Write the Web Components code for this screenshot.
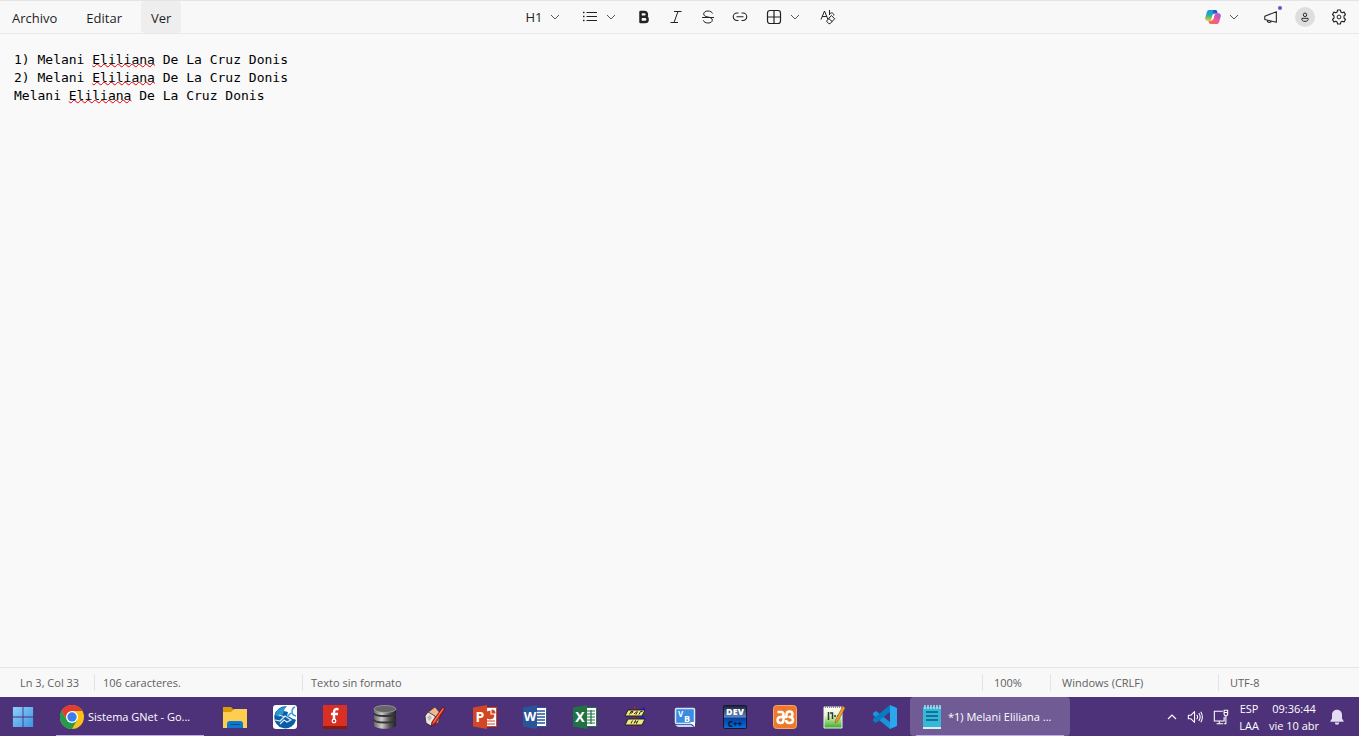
<!DOCTYPE html>
<html lang="es">
<head>
<meta charset="utf-8">
<title>Bloc de notas</title>
<style>
  body {
    margin: 0;
    font-family: "Open Sans", "Noto Sans", sans-serif;
  }
</style>
</head>
<body>
<note-desktop></note-desktop>

<script>
const ICONS = {
  chevron: ['0 0 10 10', '<path d="M1 3l4 4 4-4" fill="none" stroke="currentColor"/>'],
  chevronUp: ['0 0 10 10', '<path d="M1 7l4-4 4 4" fill="none" stroke="currentColor" stroke-width="1.2"/>'],
  list: ['0 0 16 16', '<path d="M4.500 3.500H15M4.500 7.500H15M4.500 11.500H15" stroke="currentColor"/><path d="M1 3.500h1.500M1 7.500h1.500M1 11.500h1.500" stroke="currentColor" stroke-width="1.500"/>'],
  bold: ['0 0 16 16', '<path d="M4.500 3h4a2.300 2.300 0 0 1 0 4.800h-4zM4.500 7.800h4.500a2.600 2.600 0 0 1 0 5.200H4.500z" fill="none" stroke="currentColor" stroke-width="2.500" stroke-linejoin="round"/>'],
  italic: ['0 0 16 16', '<path d="M6 2.500h7.500M2.500 13.500H10M10 2.500l-4 11" fill="none" stroke="currentColor"/>'],
  strike: ['0 0 16 16', '<path d="M12.500 4.500C12 3 10.300 2 8 2 5.500 2 3.700 3.200 3.700 5c0 1.600 1.400 2.500 4.300 3 3 .5 4.300 1.500 4.300 3.100C12.300 12.900 10.500 14 8 14c-2.400 0-4.200-1-4.700-2.700M2 8.500h12" fill="none" stroke="currentColor"/>'],
  link: ['0 0 16 16', '<path d="M6.500 4H5a3.700 3.700 0 0 0 0 7.500h1.500M9.500 4H11a3.700 3.700 0 0 1 0 7.500H9.500M4.500 7.700h7" fill="none" stroke="currentColor" stroke-width="1.100"/>'],
  table: ['0 0 16 16', '<rect x="1.500" y="1.500" width="13" height="13" rx="2.500" fill="none" stroke="currentColor" stroke-width="1.200"/><path d="M8 1.500v13M1.500 8h13" stroke="currentColor" stroke-width="1.200"/>'],
  clear: ['0 0 16 16', '<path d="M1 10.500L4.500 2 8 10.500M2.200 7.500h4.600M9.500 1v5M9.500 5.500c1-2.500 4.500-2 4.300 1" fill="none" stroke="currentColor"/><path d="M11.300 6.500l3.400 3.200-4.600 5H8.800L6.500 12.200zM8.700 9.500l3.500 3" fill="none" stroke="currentColor" stroke-linejoin="round"/>'],
  copilot: ['0 0 16 16', `<defs>
      <linearGradient id="a" x1="0" y1="0" x2="0" y2="1"><stop offset="0" stop-color="#1b8ff0"/><stop offset=".5" stop-color="#25b3a2"/><stop offset="1" stop-color="#f0c71c"/></linearGradient>
      <linearGradient id="b" x1="1" y1="0" x2="0" y2="1"><stop offset="0" stop-color="#a354e8"/><stop offset=".5" stop-color="#ee5b8d"/><stop offset="1" stop-color="#f7733c"/></linearGradient>
    </defs>
    <path d="M4.500 1h5.800c1 0 1.500.6 1.800 1.500l.5 1.700H10c-1 0-1.500.6-1.800 1.500L6.700 10c-.4 1.200-1 1.700-2 1.700H2.500C.5 11.700-.2 10 .4 8l1.500-5C2.400 1.500 3.300 1 4.500 1z" fill="url(#a)"/>
    <path d="M11.500 15H5.700c-1 0-1.500-.6-1.800-1.500l-.5-1.800H6c1 0 1.500-.6 1.800-1.500L9.300 6c.4-1.200 1-1.700 2-1.700h2.200c2 0 2.700 1.700 2.100 3.700l-1.500 5c-.5 1.500-1.400 2-2.600 2z" fill="url(#b)"/>
    <path d="M8 1h2.300c1 0 1.500.6 1.800 1.500l.5 1.700H10c-.8 0-1.300.4-1.600 1z" fill="#2458ce"/>
    <path d="M7.700 5.500h2L8.300 10.500h-2z" fill="#fff"/>`],
  megaphone: ['0 0 18 16', '<path d="M2 7.200L15 2v12L2 10.800zM4.500 11.500c0 3 4 3.500 4.800 1" fill="none" stroke="currentColor" stroke-width="1.200" stroke-linejoin="round"/>'],
  person: ['0 0 16 16', '<circle cx="8" cy="5.500" r="2" fill="none" stroke="currentColor" stroke-width="1.100"/><path d="M4.500 9.500h7c.6 2.200-1 3.500-3.500 3.500s-4.100-1.300-3.500-3.500z" fill="none" stroke="currentColor" stroke-width="1.100" stroke-linejoin="round"/>'],
  gear: ['0 0 16 16', '<path d="M6.600 1h2.800l.5 2 1.200.7 2-.6 1.400 2.400L13 7v2l1.500 1.500-1.400 2.400-2-.6-1.200.7-.5 2H6.600l-.5-2-1.200-.7-2 .6-1.400-2.400L3 9V7L1.500 5.500l1.400-2.400 2 .6L6.100 3z" fill="none" stroke="currentColor" stroke-width="1.100" stroke-linejoin="round"/><circle cx="8" cy="8" r="1.900" fill="none" stroke="currentColor"/>'],
  speaker: ['0 0 18 16', '<path d="M1.500 6h3l4-4v12l-4-4h-3zM11 5.500q1.800 2.500 0 5M13.300 3.500q3 4.500 0 9M15.500 2q3.600 6 0 12" fill="none" stroke="currentColor" stroke-width="1.200" stroke-linejoin="round"/>'],
  network: ['0 0 18 18', '<path d="M11 2.500H1.500v11h11V9M7 13.500v3M4 16.500h7.500M14.500 7v9.500h-2M12.500 1.500h4V6l-1 1.500h-2l-1-1.500zM12.500 4h4" fill="none" stroke="currentColor" stroke-width="1.200"/>'],
  bell: ['0 0 16 16', '<path d="M8 .7c3 0 5 2.200 5 5.200v3.500l1.600 2.500v.8H1.400v-.8L3 9.400V5.900C3 2.900 5 .7 8 .7zM5.800 13.500h4.400a2.200 2.200 0 0 1-4.400 0z" fill="#e4dcf2"/>'],
  windows: ['0 0 24 24', '<defs><linearGradient id="w" x2="1" y2="1"><stop stop-color="#8ed0fb"/><stop offset="1" stop-color="#3f93e0"/></linearGradient></defs><path d="M1 1h10.500v10.500H1zM12.500 1H23v10.500H12.500zM1 12.500h10.500V23H1zM12.500 12.500H23V23H12.500z" fill="url(#w)"/>'],
  chrome: ['0 0 24 24', '<circle cx="12" cy="12" r="12" fill="#fbc116"/><path d="M12 12L6.800 15 1.600 6A12 12 0 0 1 22.400 6H12z" fill="#e33b2e"/><path d="M1.600 6A12 12 0 0 0 12 24l5.200-9L12 12 6.800 15z" fill="#269a4d"/><circle cx="12" cy="12" r="6" fill="#fff"/><circle cx="12" cy="12" r="4.700" fill="#3b7ded"/>'],
  folder: ['0 0 24 24', '<path d="M0 2h8l2 2v4H0z" fill="#dc9a08"/><path d="M0 7h8l3-3h13v19H0z" fill="#fdcf50"/><path d="M4 23v-4q0-3 3-3h10q3 0 3 3v4z" fill="#0f78d0"/><path d="M7 19.500h10" stroke="#07508f"/>'],
  globe: ['0 0 24 24', '<rect width="24" height="24" rx="3" fill="#fff"/><path d="M14 1.500A11 11 0 1 0 23 15q-1-1-3-1l-3-2-3-1 1-4-4-1q0-3 3-4.500z" fill="#0b5ea5"/><path d="M14 1.500Q4 2 2 10l4 2 4-3 1-3q0-3 3-4.500z" fill="#2a96d2"/><path d="M2 15l5 1 5-5 6 4-4 2-3-2-4 4M6 10l6 2" fill="none" stroke="#d9ecf8" stroke-width="1.200"/><path d="M22 2q-3 1-3 5 0 3 4 4M18 8l-4 4" fill="none" stroke="#2f9bd6" stroke-width="1.500"/>'],
  flash: ['0 0 24 24', '<path d="M0 0h24v24H0z" fill="#d93025"/><path d="M0 21h24v3H0z" fill="#861c0e"/><path d="M15.500 4.500c-3-1.200-4.500.2-4.500 3v7M8 9h7" fill="none" stroke="#fff" stroke-width="2.400"/><circle cx="11" cy="16" r="1.800" fill="#d93025" stroke="#fff" stroke-width="1.300"/>'],
  database: ['0 0 24 24', '<defs><linearGradient id="d"><stop stop-color="#666"/><stop offset=".35" stop-color="#ccc"/><stop offset=".7" stop-color="#555"/><stop offset="1" stop-color="#222"/></linearGradient></defs><path d="M1 4v16c0 5 22 5 22 0V4z" fill="url(#d)"/><path d="M1 8c0 4 22 4 22 0M1 14.500c0 4 22 4 22 0" fill="none" stroke="#333" stroke-width="1.800"/><ellipse cx="12" cy="4" rx="11" ry="3.500" fill="#666" stroke="#aaa" stroke-width=".7"/>'],
  pencilHouse: ['0 0 24 24', '<path d="M4 8l8-6 6 7-3 9-6 2z" fill="#f0b98c" stroke="#3b2923" stroke-width=".7"/><path d="M2 11l3-4 7 4 1 7-5 3-5-3z" fill="#e9e6e2" stroke="#33251f" stroke-width=".8"/><path d="M4 12l3-2 2 3-3 3z" fill="#bbb"/><path d="M20 2l2 2L12 19l-4 2.500L9 17z" fill="#e42a22" stroke="#50150f" stroke-width=".8"/><path d="M20 3.500L10.500 17.500" stroke="#ff8a76"/>'],
  powerpoint: ['0 0 24 24', '<path d="M12 2.500h11.500v19H12z" fill="#fff" stroke="#d24625"/><path d="M17 6a4 4 0 1 0 4 4h-4zM14 16h8M14 19h8" fill="#d24625" stroke="#d24625"/><path d="M18.500 4.500v4h4a4 4 0 0 0-4-4z" fill="#d24625"/><path d="M0 2.500L14 0v24L0 21.500z" fill="#d24625"/><text x="7" y="17" text-anchor="middle" font-size="14" font-weight="700" fill="#fff">P</text>'],
  word: ['0 0 24 24', '<path d="M12 2.500h11.500v19H12z" fill="#fff" stroke="#295699"/><path d="M14 6h8M14 9h8M14 12h8M14 15h8M14 18h8" stroke="#295699" stroke-width="1.300"/><path d="M0 2.500L14 0v24L0 21.500z" fill="#295699"/><text x="7" y="16" text-anchor="middle" font-size="13" font-weight="700" fill="#fff">W</text>'],
  excel: ['0 0 24 24', '<path d="M12 2.500h11.500v19H12z" fill="#fff" stroke="#207245"/><path d="M18 5v14M14 6h8M14 9h8M14 12h8M14 15h8M14 18h8" stroke="#207245" stroke-width="1.200"/><path d="M0 2.500L14 0v24L0 21.500z" fill="#207245"/><text x="7" y="17" text-anchor="middle" font-size="14" font-weight="700" fill="#fff">X</text>'],
  pseint: ['0 0 24 24', '<path d="M11.500 1v22" stroke="#a02335" stroke-width="2"/><path d="M17 6l5-3M17 15l4-4" stroke="#2522c5" stroke-width="3"/><path d="M5 5h17l-3 6H2zM5 14h17l-3 6H2z" fill="#eee982" stroke="#222218"/><path d="M6.500 9.500l1.500-3h2l-1 1.500H8M11 9l3-2.500M13 9.500l1.500-3M16 9.500l1.500-3h2M8 18.500l1.500-3M11 18.500l1.500-3 1 3 1.500-3" fill="none" stroke="#302f28"/>'],
  visualBasic: ['0 0 24 24', '<rect x="2.500" y="3.500" width="19" height="15" rx="1" fill="#3b8ce0" stroke="#cfe8fc" stroke-width="1.500"/><path d="M2 20h16l3 2H5z" fill="#b9daf6"/><path d="M17 17h5v5z" fill="#fff"/><text x="5" y="12" font-size="8" font-weight="700" fill="#fff">V</text><text x="11" y="17" font-size="9" font-weight="700" fill="#fff">B</text>'],
  devcpp: ['0 0 24 24', '<defs><linearGradient id="v" x2="0" y2="1"><stop stop-color="#182033"/><stop offset=".5" stop-color="#5b87c2"/><stop offset=".55" stop-color="#0a3f9f"/><stop offset="1" stop-color="#0870dc"/></linearGradient></defs><rect x=".5" y=".5" width="23" height="23" rx="1" fill="url(#v)" stroke="#101b34"/><text x="12" y="10" text-anchor="middle" font-size="9" font-weight="800" fill="#fff">DEV</text><text x="12" y="22" text-anchor="middle" font-size="8" font-weight="800" fill="#041c48">C++</text>'],
  xampp: ['0 0 24 24', '<rect x=".5" y=".5" width="23" height="23" rx="3" fill="#ef792b" stroke="#f7a56c"/><path d="M4.500 7H8q2.500 0 2.500 2.500T8 12q-3.500 0-3.500 3T7.500 18t3-3v-3h3V9.500Q13.500 6.500 16.500 6.500t3 2.700T16.500 12q3.500 0 3.500 3t-3.500 3-3.300-3" fill="none" stroke="#fff" stroke-width="2.500" stroke-linejoin="round"/>'],
  notepadpp: ['0 0 24 24', '<defs><linearGradient id="n" x2="0" y2="1"><stop stop-color="#fff"/><stop offset=".4" stop-color="#e5f5c9"/><stop offset="1" stop-color="#39ad23"/></linearGradient></defs><path d="M1 2h18v21H1z" fill="url(#n)" stroke="#eee"/><path d="M2 2h17" stroke="#888" stroke-width="2" stroke-dasharray="1 1"/><path d="M5.500 7v8M7 8h2.500v6M11 11h2M14 11h2" fill="none" stroke="#333" stroke-width="1.500"/><path d="M20 1l2 2-7 13-3 2 1-4z" fill="#eea22b" stroke="#a85b20" stroke-width=".7"/>'],
  vscode: ['0 0 24 24', '<path d="M17 24v-7L3 6 0 8v2z" fill="#1795df"/><path d="M17 0v7L3 18l-3-2v-2z" fill="#087bc1"/><path d="M17 0l7 3v18l-7 3z" fill="#29a8ed"/>'],
  notepad: ['0 0 24 24', '<path d="M3 2h18v20H3z" fill="#36b8d8"/><path d="M3 22h18v2H3z" fill="#d9eef3"/><path d="M5 0v4M8 0v4M11 0v4M14 0v4M17 0v4M20 0v4" stroke="#b9f3ff" stroke-width="1.300"/><path d="M6 7h12M6 11h12M6 15h12" stroke="#075c80" stroke-width="1.700"/>'],
};

class AppIcon extends HTMLElement {
  constructor() {
    super();
    this.attachShadow({mode: "open"});
  }

  connectedCallback() {
    const [viewBox, shapes] = ICONS[this.getAttribute("name")];
    this.shadowRoot.innerHTML = /* html */`
    <style>
      :host { display: block; flex: none; width: var(--icon-size, 16px); height: var(--icon-size, 16px); }
      svg { display: block; width: 100%; height: 100%; }
      text { font-family: "Open Sans", sans-serif; }
    </style>
    <svg viewBox="${viewBox}" aria-hidden="true">${shapes}</svg>
    `
  }
}

class ToolButton extends HTMLElement {
  constructor() {
    super();
    this.attachShadow({mode: "open"});
  }

  connectedCallback() {
    const split = this.hasAttribute("split");
    this.shadowRoot.innerHTML = /* html */`
    <style>
      :host { display: block; }
      button {
        display: flex;
        align-items: center;
        justify-content: center;
        width: 32px;
        height: 32px;
        padding: 0;
        border: 0;
        border-radius: 4px;
        background: none;
        color: inherit;
        font: inherit;
      }
      button:hover { background: #eee; }
      :host([split]) button {
        width: 56px;
        justify-content: space-between;
        padding: 0 12px 0 10px;
      }
      .arrow { --icon-size: 10px; color: #555; }
    </style>
    <button aria-label="${this.getAttribute("label")}">
      <slot></slot>
      ${split ? '<app-icon class="arrow" name="chevron"></app-icon>' : ''}
    </button>
    `
  }
}

class MenuItem extends HTMLElement {
  constructor() {
    super();
    this.attachShadow({mode: "open"});
    this.shadowRoot.innerHTML = /* html */`
    <style>
      :host { display: block; }
      button {
        height: 32px;
        padding: 2px 10px 0;
        border: 0;
        border-radius: 4px;
        background: none;
        color: #1f1f1f;
        font: inherit;
      }
      :host([active]) button { background: #eee; }
    </style>
    <button><slot></slot></button>
    `
  }
}

class NoteToolbar extends HTMLElement {
  constructor() {
    super();
    this.attachShadow({mode: "open"});
  }

  static get styles(){
    return /* css */`
      :host {
        display: grid;
        grid-template-columns: 1fr auto 1fr;
        border-top: 1px solid #e4e4e4;
        border-bottom: 1px solid #e9e9e9;
        background: #f8f8f8;
        color: #222;
        font-size: 13px;
      }

      nav, .tools, .account {
        display: flex;
        align-items: center;
      }

      nav {
        gap: 9px;
        padding-left: 2px;
      }

      .account {
        justify-content: flex-end;
        gap: 2px;
        padding-right: 4px;
      }

      .assistant {
        margin-right: 2px;
      }

      .news {
        position: relative;
      }

      .news::after {
        content: "";
        position: absolute;
        top: 5px;
        right: 5px;
        width: 4px;
        height: 4px;
        border-radius: 50%;
        background: #7a4fc0;
      }

      .avatar {
        display: grid;
        place-items: center;
        width: 20px;
        height: 20px;
        border-radius: 50%;
        background: #dedede;
        --icon-size: 14px;
      }
    `
  }

  connectedCallback() {
    this.shadowRoot.innerHTML = /* html */`
    <style>${NoteToolbar.styles}</style>
    <nav>
      <menu-item>Archivo</menu-item>
      <menu-item>Editar</menu-item>
      <menu-item active>Ver</menu-item>
    </nav>
    <div class="tools">
      <tool-button split label="Encabezado">H1</tool-button>
      <tool-button split label="Lista"><app-icon name="list"></app-icon></tool-button>
      <tool-button label="Negrita"><app-icon name="bold"></app-icon></tool-button>
      <tool-button label="Cursiva"><app-icon name="italic"></app-icon></tool-button>
      <tool-button label="Tachado"><app-icon name="strike"></app-icon></tool-button>
      <tool-button label="Vínculo"><app-icon name="link"></app-icon></tool-button>
      <tool-button split label="Tabla"><app-icon name="table"></app-icon></tool-button>
      <tool-button label="Borrar formato"><app-icon name="clear"></app-icon></tool-button>
    </div>
    <div class="account">
      <tool-button class="assistant" split label="Copilot"><app-icon name="copilot"></app-icon></tool-button>
      <tool-button class="news" label="Novedades"><app-icon name="megaphone"></app-icon></tool-button>
      <tool-button label="Cuenta"><span class="avatar"><app-icon name="person"></app-icon></span></tool-button>
      <tool-button label="Configuración"><app-icon name="gear"></app-icon></tool-button>
    </div>
    `
  }
}

class NoteEditor extends HTMLElement {
  constructor() {
    super();
    this.attachShadow({mode: "open"});
  }

  connectedCallback() {
    this.shadowRoot.innerHTML = /* html */`
    <style>
      :host { display: flex; overflow: auto; background: #f9f9f9; }
      .page {
        flex: 1;
        padding: 17px 14px;
        outline: 0;
        color: #000;
        font-family: "DejaVu Sans Mono", monospace;
        font-size: 13px;
        line-height: 18px;
      }
      .misspelled {
        text-decoration: underline wavy #e00000 1px;
        text-underline-offset: -1px;
        text-decoration-skip-ink: none;
      }
    </style>
    <div class="page" role="textbox" aria-multiline="true" aria-label="Editor de texto" contenteditable="true" spellcheck="false">
      <div>1) Melani <span class="misspelled">Eliliana</span> De La Cruz Donis</div>
      <div>2) Melani <span class="misspelled">Eliliana</span> De La Cruz Donis</div>
      <div>Melani <span class="misspelled">Eliliana</span> De La Cruz Donis</div>
    </div>
    `
  }
}

class StatusBar extends HTMLElement {
  constructor() {
    super();
    this.attachShadow({mode: "open"});
  }

  connectedCallback() {
    this.shadowRoot.innerHTML = /* html */`
    <style>
      :host {
        display: grid;
        grid-template-columns: 94px 208px 1fr 68px 168px 141px;
        padding: 6px 0;
        border-top: 1px solid #e5e5e5;
        background: #f8f8f8;
        color: #606060;
        font-size: 11px;
        line-height: 17px;
      }
      span { padding-left: 8px; border-left: 1px solid #e3e3e3; }
      .position { padding-left: 20px; border: 0; }
      .wide { padding-left: 11px; }
    </style>
    <span class="position">Ln 3, Col 33</span>
    <span>106 caracteres.</span>
    <span>Texto sin formato</span>
    <span class="wide">100%</span>
    <span class="wide">Windows (CRLF)</span>
    <span class="wide">UTF-8</span>
    `
  }
}

class TaskButton extends HTMLElement {
  constructor() {
    super();
    this.attachShadow({mode: "open"});
  }

  connectedCallback() {
    this.shadowRoot.innerHTML = /* html */`
    <style>
      :host { display: block; flex: none; width: 50px; }
      :host([open]) { width: 160px; }
      button {
        display: flex;
        align-items: center;
        justify-content: center;
        gap: 4px;
        position: relative;
        width: 100%;
        height: 100%;
        padding: 0;
        border: 0;
        border-radius: 4px;
        background: none;
        color: #fff;
        font: inherit;
        --icon-size: 24px;
      }
      :host([open]) button { justify-content: flex-start; padding: 0 10px; }
      :host([open]) button::after {
        content: "";
        position: absolute;
        bottom: 0;
        left: 6px;
        right: 6px;
        height: 1px;
        background: #c5a9ee;
      }
      :host([active]) button { background: #705b94; }
      :host([start]) button { --icon-size: 22px; padding-right: 4px; }
    </style>
    <button aria-label="${this.getAttribute("label")}">
      <app-icon name="${this.getAttribute("icon")}"></app-icon>
      <slot></slot>
    </button>
    `
  }
}

class TaskBar extends HTMLElement {
  constructor() {
    super();
    this.attachShadow({mode: "open"});
  }

  static get styles(){
    return /* css */`
      :host {
        display: flex;
        height: 39px;
        background: #4d3279;
        color: #fff;
        font-size: 11px;
        white-space: nowrap;
      }

      .tray {
        display: flex;
        align-items: center;
        gap: 10px;
        margin-left: auto;
        padding-right: 14px;
        line-height: 17px;
        text-align: center;
      }

      button {
        display: flex;
        padding: 0;
        border: 0;
        background: none;
        color: inherit;
        font: inherit;
        line-height: inherit;
      }

      .small {
        --icon-size: 10px;
      }
    `
  }

  connectedCallback() {
    const pinned = {
      folder: "Explorador de archivos",
      globe: "Cliente de red",
      flash: "Flash",
      database: "Base de datos",
      pencilHouse: "Diseñador",
      powerpoint: "PowerPoint",
      word: "Word",
      excel: "Excel",
      pseint: "PSeInt",
      visualBasic: "Visual Basic",
      devcpp: "Dev-C++",
      xampp: "XAMPP",
      notepadpp: "Editor de código",
      vscode: "Visual Studio Code",
    };

    this.shadowRoot.innerHTML = /* html */`
    <style>${TaskBar.styles}</style>
    <task-button start icon="windows" label="Inicio"></task-button>
    <task-button open icon="chrome" label="Sistema GNet">Sistema GNet - Go...</task-button>
    ${Object.entries(pinned).map(([icon, label]) => `<task-button icon="${icon}" label="${label}"></task-button>`).join("")}
    <task-button open active icon="notepad" label="Bloc de notas">*1) Melani Eliliana ...</task-button>
    <div class="tray">
      <button class="small" aria-label="Iconos ocultos"><app-icon name="chevronUp"></app-icon></button>
      <button aria-label="Volumen"><app-icon name="speaker"></app-icon></button>
      <button aria-label="Red"><app-icon name="network"></app-icon></button>
      <button aria-label="Idioma"><span>ESP<br>LAA</span></button>
      <button aria-label="Fecha y hora"><span>09:36:44<br>vie 10 abr</span></button>
      <button aria-label="Notificaciones"><app-icon name="bell"></app-icon></button>
    </div>
    `
  }
}

class NoteDesktop extends HTMLElement {
  constructor() {
    super();
    this.attachShadow({mode: "open"});
  }

  connectedCallback() {
    this.shadowRoot.innerHTML = /* html */`
    <style>
      :host { display: flex; flex-direction: column; height: 100vh; }
      note-editor { flex: 1; min-height: 0; }
    </style>
    <note-toolbar></note-toolbar>
    <note-editor></note-editor>
    <status-bar></status-bar>
    <task-bar></task-bar>
    `
  }
}

customElements.define('app-icon', AppIcon);
customElements.define('tool-button', ToolButton);
customElements.define('menu-item', MenuItem);
customElements.define('note-toolbar', NoteToolbar);
customElements.define('note-editor', NoteEditor);
customElements.define('status-bar', StatusBar);
customElements.define('task-button', TaskButton);
customElements.define('task-bar', TaskBar);
customElements.define('note-desktop', NoteDesktop);
</script>
</body>
</html>
